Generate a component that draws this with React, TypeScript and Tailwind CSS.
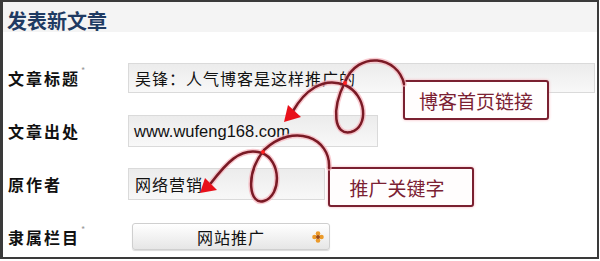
export default function App() {
  const cjk = { fontFamily: '"Noto Sans CJK SC", "Noto Sans", sans-serif' };
  const line1 = "M404 84 C398 56, 358 50, 345 82 C331 110, 334 136, 351 132 C369 127, 367 95, 345 85 C322 76, 304 92, 293 111";
  const line2 = "M329 168 C331 138, 294 122, 264 150 C244 176, 250 206, 264 201 C282 195, 281 160, 262 153 C240 146, 225 165, 211 183";
  return (
    <div className="relative w-[600px] h-[261px] bg-white overflow-hidden" style={cjk}>
      <div className="w-[599px] h-[259px] border-[#3a3a3a] border-l-[3px] border-t-2 border-r-2 border-b-2 flex flex-col">
        <div className="h-[30px] bg-[#f4f4f4] pl-[4px] pt-[9px]">
          <h1 className="text-[20px] leading-[20px] font-bold text-[#1f3b63]">发表新文章</h1>
        </div>

        <div className="flex flex-col pl-[5px] pt-[31px]">
          <div className="flex items-center h-[30px]">
            <div className="w-[120px] flex items-start">
              <span className="text-[16px] font-bold tracking-[2px] text-[#111]">文章标题</span>
              <span className="text-[9px] text-[#999] ml-[1px] -mt-[2px]">*</span>
            </div>
            <div className="flex-1 h-[30px] mr-[2px] flex items-center pl-[6px] bg-gradient-to-b from-[#ececec] to-[#f8f8f8] border border-[#dadada] text-[16px] tracking-[1px] text-[#111]">
              吴锋：人气博客是这样推广的
            </div>
          </div>

          <div className="flex items-center h-[32px] mt-[22px]">
            <div className="w-[120px]">
              <span className="text-[16px] font-bold tracking-[2px] text-[#111]">文章出处</span>
            </div>
            <div className="w-[250px] h-[32px] flex items-center pl-[5px] bg-gradient-to-b from-[#ececec] to-[#f8f8f8] border border-[#dadada] text-[16.5px] text-[#111]" style={{ fontFamily: '"Liberation Sans", Arial, sans-serif' }}>
              www.wufeng168.com
            </div>
          </div>

          <div className="flex items-center h-[32px] mt-[21px]">
            <div className="w-[120px]">
              <span className="text-[16px] font-bold tracking-[2px] text-[#111]">原作者</span>
            </div>
            <div className="w-[197px] h-[32px] flex items-center pl-[6px] bg-gradient-to-b from-[#ececec] to-[#f8f8f8] border border-[#dadada] text-[16px] tracking-[1px] text-[#111]">
              网络营销
            </div>
          </div>

          <div className="flex items-center h-[27px] mt-[23px]">
            <div className="w-[124px] flex items-start">
              <span className="text-[16px] font-bold tracking-[2px] text-[#111]">隶属栏目</span>
              <span className="text-[9px] text-[#999] ml-[1px] -mt-[2px]">*</span>
            </div>
            <div className="relative w-[198px] h-[27px] flex items-center justify-center rounded-[3px] bg-gradient-to-b from-[#ffffff] to-[#e6e6e6] border border-[#cfcfcf] shadow-[0_1px_1px_rgba(0,0,0,0.15)] text-[16px] tracking-[1px] text-[#111]">
              网站推广
              <svg className="absolute right-[5px] top-[7px]" width="12" height="12" viewBox="0 0 12 12">
                <circle cx="6" cy="2.5" r="2.3" fill="#eb9a2a" />
                <circle cx="6" cy="9.5" r="2.3" fill="#eb9a2a" />
                <circle cx="2.5" cy="6" r="2.3" fill="#eb9a2a" />
                <circle cx="9.5" cy="6" r="2.3" fill="#eb9a2a" />
                <circle cx="6" cy="6" r="2" fill="#9a4a18" />
              </svg>
            </div>
          </div>
        </div>
      </div>

      <div className="absolute left-[403px] top-[80px] w-[146px] h-[40px] border-2 border-[#7a2030] rounded-[3px] bg-[#fffdfd] shadow-[0_0_3px_#f3b0b8] flex items-center justify-center">
        <span className="text-[19px] leading-none text-[#7b2133]">博客首页链接</span>
      </div>
      <div className="absolute left-[328px] top-[167px] w-[146px] h-[40px] border-2 border-[#7a2030] rounded-[3px] bg-[#fffdfd] shadow-[0_0_3px_#f3b0b8] flex items-center justify-center">
        <span className="text-[19px] leading-none text-[#7b2133] pr-[8px]">推广关键字</span>
      </div>

      <svg className="absolute inset-0 pointer-events-none" width="600" height="261" viewBox="0 0 600 261">
        <g fill="none" strokeLinecap="round">
          <path d={line1} stroke="#f6b4bc" strokeWidth="5.5" opacity="0.7" />
          <path d={line1} stroke="#7a1a25" strokeWidth="2.5" />
          <path d={line2} stroke="#f6b4bc" strokeWidth="5.5" opacity="0.7" />
          <path d={line2} stroke="#7a1a25" strokeWidth="2.5" />
        </g>
        <polygon points="284,122 288,105 301,117" fill="#e8101a" />
        <polygon points="200,193 205,178 217,190" fill="#e8101a" />
        <circle cx="345" cy="83" r="2" fill="#ff2020" />
        <circle cx="263" cy="152" r="2" fill="#ff2020" />
      </svg>
    </div>
  );
}
